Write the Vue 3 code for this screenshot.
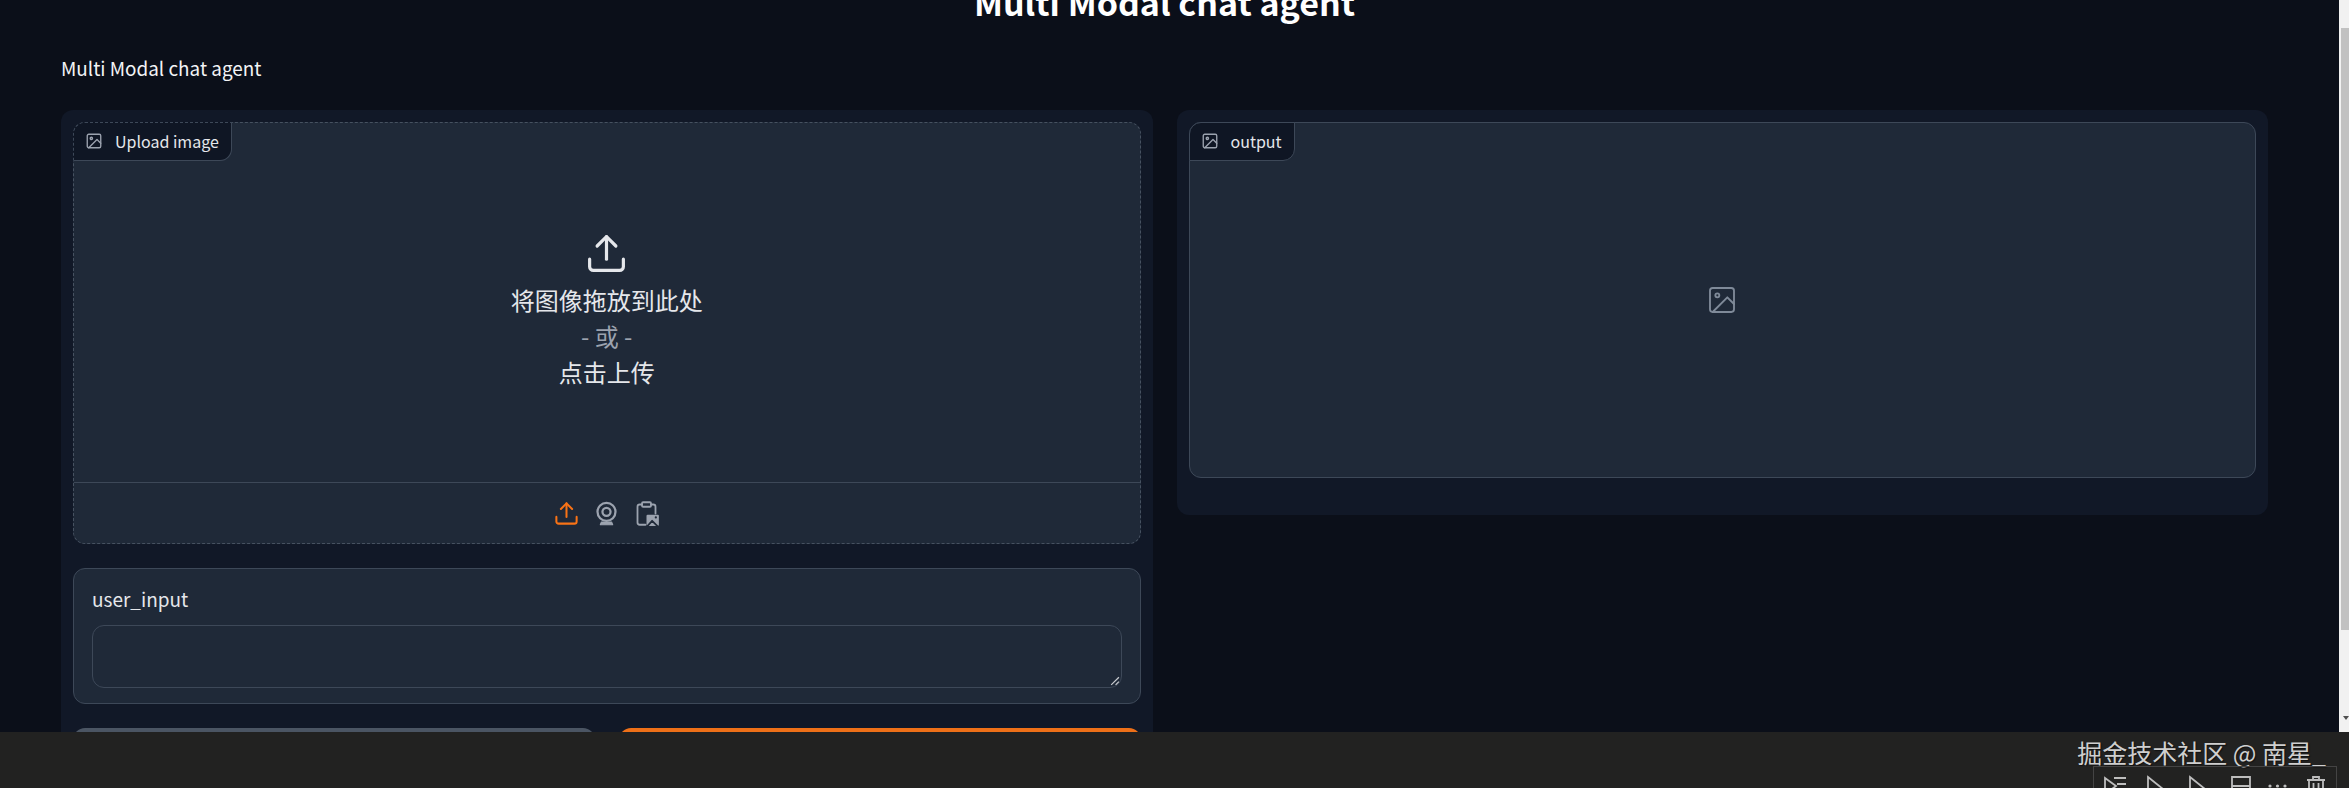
<script setup>
const lines = [
  { text: '将图像拖放到此处', muted: false },
  { text: '- 或 -', muted: true },
  { text: '点击上传', muted: false }
]
</script>

<template>
  <div class="screen">
    <div class="viewport">
      <div class="page">
        <h1 class="title">Multi Modal chat agent</h1>
        <p class="desc">Multi Modal chat agent</p>
        <div class="columns">
          <div class="col">
            <section class="panel left-panel">
              <div class="image-block dashed">
                <div class="tag">
                  <svg class="tag-icon" viewBox="0 0 24 24" fill="none" stroke="currentColor" stroke-width="1.8" stroke-linecap="round" stroke-linejoin="round"><rect x="3" y="3" width="18" height="18" rx="2"/><circle cx="8.5" cy="8.5" r="1.5"/><polyline points="21 15 16 10 5 21"/></svg>
                  <span class="tag-text">Upload image</span>
                </div>
                <div class="drop">
                  <svg class="upload-big" viewBox="0 0 24 24" fill="none" stroke="currentColor" stroke-width="1.7" stroke-linecap="round" stroke-linejoin="round"><path d="M21 15v4a2 2 0 0 1-2 2H5a2 2 0 0 1-2-2v-4"/><polyline points="17 8 12 3 7 8"/><line x1="12" y1="3" x2="12" y2="15"/></svg>
                  <div v-for="l in lines" :key="l.text" class="drop-line" :class="{ or: l.muted }">{{ l.text }}</div>
                </div>
                <div class="sources">
                  <svg class="src accent" viewBox="0 0 24 24" fill="none" stroke="currentColor" stroke-width="1.8" stroke-linecap="round" stroke-linejoin="round"><path d="M21 15v4a2 2 0 0 1-2 2H5a2 2 0 0 1-2-2v-4"/><polyline points="17 8 12 3 7 8"/><line x1="12" y1="3" x2="12" y2="15"/></svg>
                  <svg class="src" viewBox="0 0 24 24" fill="none" stroke="currentColor" stroke-width="2" stroke-linecap="round" stroke-linejoin="round"><circle cx="12" cy="10.5" r="8"/><circle cx="12" cy="10.5" r="3.6"/><path d="M7.5 19.5 6.5 22h11l-1-2.5z" fill="currentColor" stroke-width="1"/></svg>
                  <svg class="src" viewBox="0 0 24 24" fill="none" stroke="currentColor" stroke-width="1.6" stroke-linecap="round" stroke-linejoin="round"><path d="M8 4H6a2 2 0 0 0-2 2v14a2 2 0 0 0 2 2h5"/><path d="M16 4h2a2 2 0 0 1 2 2v6"/><rect x="8" y="2" width="8" height="4" rx="1"/><rect x="12" y="13" width="11" height="10" rx="1" fill="currentColor" stroke="none"/><path d="M13 23l4-4.5 4.5 4.5" stroke="#1f2938" stroke-width="1.6"/><circle cx="20.3" cy="15.5" r="1" fill="#1f2938" stroke="none"/></svg>
                </div>
              </div>
              <div class="input-block">
                <label class="input-label">user_input</label>
                <div class="textarea">
                  <svg class="grip" viewBox="0 0 10 10"><path d="M9 2 2 9M9 6 6 9" stroke="#c9ccd1" stroke-width="1.1" fill="none"/></svg>
                </div>
              </div>
              <div class="buttons">
                <button class="btn secondary"></button>
                <button class="btn primary"></button>
              </div>
            </section>
          </div>
          <div class="col">
            <section class="panel right-panel">
              <div class="image-block solid">
                <div class="tag">
                  <svg class="tag-icon" viewBox="0 0 24 24" fill="none" stroke="currentColor" stroke-width="1.8" stroke-linecap="round" stroke-linejoin="round"><rect x="3" y="3" width="18" height="18" rx="2"/><circle cx="8.5" cy="8.5" r="1.5"/><polyline points="21 15 16 10 5 21"/></svg>
                  <span class="tag-text">output</span>
                </div>
                <div class="empty">
                  <svg class="empty-icon" viewBox="0 0 24 24" fill="none" stroke="currentColor" stroke-width="1.4" stroke-linecap="round" stroke-linejoin="round"><rect x="3" y="3" width="18" height="18" rx="2"/><circle cx="8.5" cy="8.5" r="1.5"/><polyline points="21 15 16 10 5 21"/></svg>
                </div>
              </div>
            </section>
          </div>
        </div>
      </div>
      <div class="scrollbar">
        <div class="thumb"></div>
        <div class="arrow"></div>
      </div>
    </div>
    <footer class="bar">
      <div class="watermark">掘金技术社区 @ 南星_</div>
      <div class="toolbar">
        <svg viewBox="0 0 22 22" fill="none" stroke="#bdbdbd" stroke-width="1.8"><path d="M1 2l11 8-11 8zM10 2h12M13 8h9M13 14h9"/></svg>
        <svg viewBox="0 0 22 22" fill="none" stroke="#bdbdbd" stroke-width="1.8"><path d="M2 1l15 12-15 12z"/></svg>
        <svg viewBox="0 0 22 22" fill="none" stroke="#bdbdbd" stroke-width="1.8"><path d="M2 1l15 12-15 12z"/></svg>
        <svg viewBox="0 0 22 22" fill="none" stroke="#bdbdbd" stroke-width="1.8"><path d="M2 1h18v24H2zM2 10h18"/></svg>
        <svg class="dots" viewBox="0 0 18 22" fill="#bdbdbd"><circle cx="2" cy="10" r="1.6"/><circle cx="9.5" cy="10" r="1.6"/><circle cx="17" cy="10" r="1.6"/></svg>
        <svg viewBox="0 0 22 22" fill="none" stroke="#bdbdbd" stroke-width="1.8"><path d="M1 4h18M7 4V1h6v3M3 4v20h14V4M7.5 7v14M12.5 7v14"/></svg>
      </div>
    </footer>
  </div>
</template>

<style>
html, body { margin: 0; height: 100%; overflow: hidden; background: #0b0f19; }
</style>

<style scoped>
.screen {
  width: 2349px;
  height: 788px;
  display: flex;
  flex-direction: column;
  overflow: hidden;
  font-family: "Noto Sans CJK SC", "Noto Sans", sans-serif;
  color: #f3f4f6;
}
.viewport { height: 732px; flex: none; display: flex; overflow: hidden; background: #0b0f19; }
.page { flex: 1; min-width: 0; padding: 0 71px 0 61px; }
.title {
  margin: -19px 0 0;
  height: 42px;
  line-height: 42px;
  font-size: 34px;
  font-weight: 600;
  text-align: center;
  color: #fff;
}
.desc {
  margin: 32px 0 0;
  height: 26px;
  line-height: 26px;
  font-size: 18.9px;
  color: #f3f4f6;
}
.columns { margin-top: 29px; display: grid; grid-template-columns: 1fr 1fr; gap: 24px; align-items: start; }
.panel { background: #111827; border-radius: 12px; padding: 12px; box-sizing: border-box; }
.left-panel { height: 700px; }
.image-block {
  position: relative;
  background: #1f2938;
  border-radius: 12px;
  box-sizing: border-box;
  display: flex;
  flex-direction: column;
}
.dashed { height: 422px; border: 1px dashed #465160; }
.solid { height: 356px; border: 1px solid #3d4858; }
.tag {
  position: absolute;
  left: -1px;
  top: -1px;
  height: 39px;
  box-sizing: border-box;
  display: flex;
  align-items: center;
  gap: 12px;
  padding: 0 12px 0 11px;
  background: #0f1624;
  border: 1px solid #3d4858;
  border-radius: 12px 0 12px 0;
  font-size: 16px;
  color: #e5e7eb;
}
.tag-text { line-height: 24px; margin-top: -2px; }
.dashed .tag { border-top-style: dashed; border-left-style: dashed; }
.tag-icon { width: 18px; height: 18px; color: #9ca3af; margin-top: -1px; }
.drop { flex: 1; display: flex; flex-direction: column; align-items: center; justify-content: center; padding-top: 16px; }
.upload-big { width: 45px; height: 45px; color: #e5e7eb; margin-bottom: 6px; }
.drop-line { font-size: 24px; line-height: 36px; color: #e5e7eb; }
.or { color: #9ca3af; }
.sources {
  height: 60px;
  border-top: 1px solid #3d4858;
  display: flex;
  align-items: center;
  justify-content: center;
  gap: 13px;
  color: #9ca3af;
}
.src { width: 27px; height: 27px; }
.accent { color: #f97316; }
.input-block {
  margin-top: 24px;
  background: #1f2938;
  border: 1px solid #3d4858;
  border-radius: 12px;
  padding: 16px 18px;
  height: 136px;
  box-sizing: border-box;
}
.input-label { display: block; font-size: 19px; line-height: 28px; color: #e5e7eb; }
.textarea {
  position: relative;
  margin-top: 12px;
  height: 63px;
  border: 1px solid #3d4858;
  border-radius: 12px;
  box-sizing: border-box;
}
.grip { position: absolute; right: 1px; bottom: 1px; width: 11px; height: 11px; }
.buttons { margin-top: 24px; display: grid; grid-template-columns: 1fr 1fr; gap: 24px; }
.btn { height: 60px; border: 0; border-radius: 12px; padding: 0; }
.secondary { background: #4b5563; }
.primary { background: #ee7018; }
.right-panel { height: 405px; }
.empty { flex: 1; display: flex; align-items: center; justify-content: center; }
.empty-icon { width: 32px; height: 32px; color: #7f8a99; }
.scrollbar { position: relative; width: 10px; background: #f1f1f1; }
.thumb { margin: 28px 0 0 2px; height: 602px; background: #c1c1c1; }
.arrow {
  position: absolute;
  right: 0;
  top: 716px;
  width: 0;
  height: 0;
  border-left: 3px solid transparent;
  border-right: 3px solid transparent;
  border-top: 4px solid #505050;
}
.bar {
  height: 56px;
  flex: none;
  background: #222221;
  position: relative;
  overflow: hidden;
}
.watermark {
  position: absolute;
  right: 23px;
  top: 2px;
  font-size: 25px;
  line-height: 36px;
  color: #cfcfcf;
  text-shadow: 1px 1px 1px #111;
}
.toolbar {
  position: absolute;
  left: 2093px;
  top: 34px;
  width: 244px;
  height: 40px;
  box-sizing: border-box;
  border: 1px solid #444;
  display: flex;
  align-items: flex-start;
  gap: 20px;
  padding: 9px 10px;
}
.toolbar svg { width: 22px; height: 22px; flex: none; overflow: visible; }
.toolbar .dots { width: 18px; margin-left: -4px; }
</style>
